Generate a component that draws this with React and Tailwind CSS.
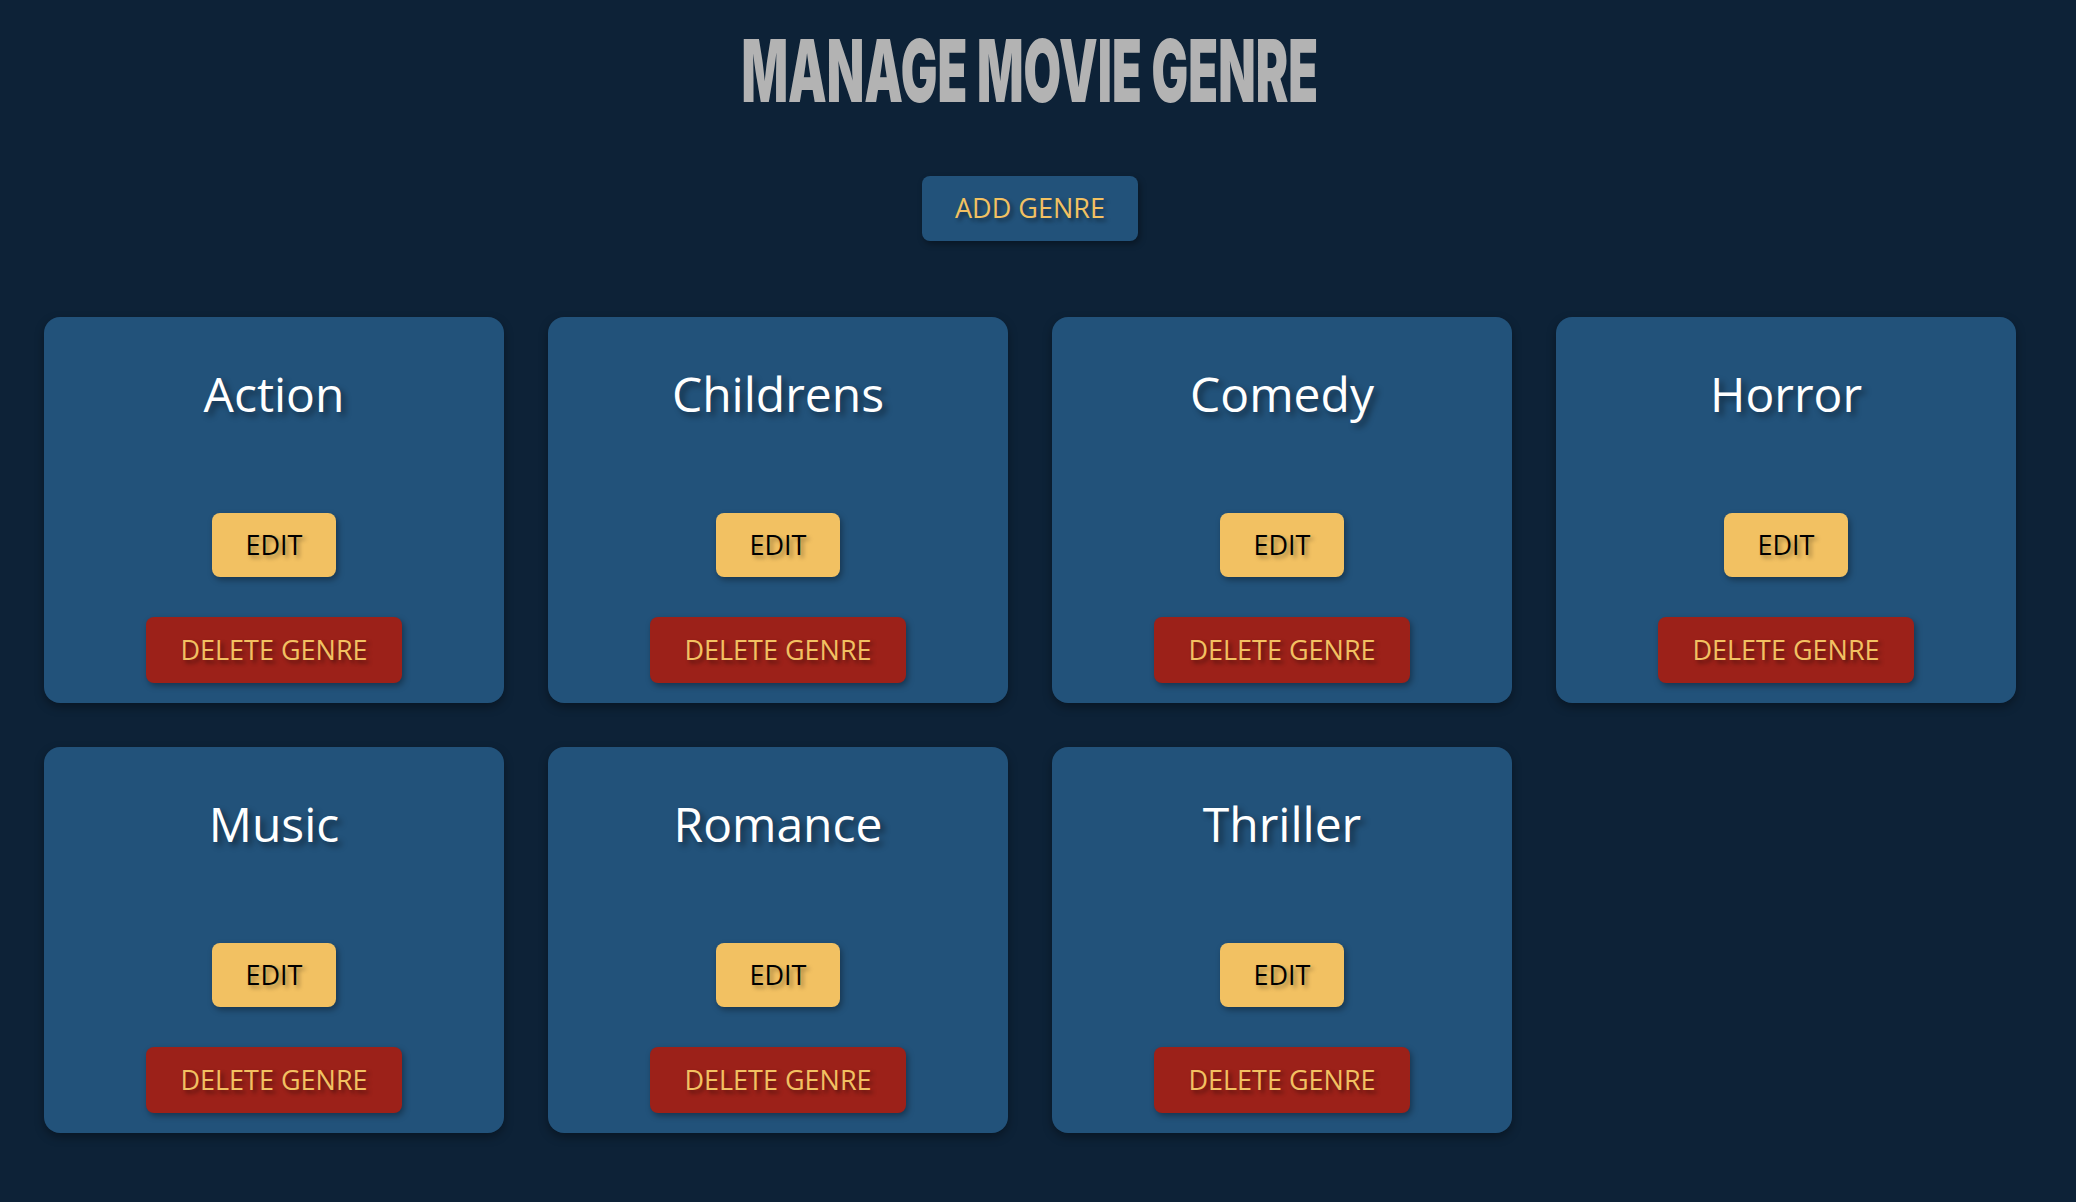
import React from "react";

const genres = ["Action", "Childrens", "Comedy", "Horror", "Music", "Romance", "Thriller"];

function GenreCard({ name }) {
  return (
    <div className="flex flex-col items-center rounded-2xl bg-[#22527a] pt-[45px] pb-[20px] shadow-[0_4px_10px_rgba(0,0,0,0.35)]">
      <h2 className="text-[48px] leading-[64px] font-medium text-white [text-shadow:4px_4px_6px_rgba(0,0,0,0.45)]">
        {name}
      </h2>
      <button className="mt-[87px] flex h-[64px] w-[124px] items-center justify-center rounded-lg bg-[#f2c162] text-[27px] font-medium text-black shadow-[2px_3px_6px_rgba(0,0,0,0.35)] [text-shadow:3px_3px_4px_rgba(0,0,0,0.35)]">
        EDIT
      </button>
      <button className="mt-[40px] flex h-[66px] w-[256px] items-center justify-center rounded-lg bg-[#9c2119] text-[27px] font-medium text-[#f2c162] shadow-[2px_3px_6px_rgba(0,0,0,0.35)] [text-shadow:3px_3px_4px_rgba(0,0,0,0.45)]">
        DELETE GENRE
      </button>
    </div>
  );
}

export default function App() {
  return (
    <div className="min-h-screen w-full bg-[#0d2237] font-['Open_Sans','Noto_Sans',sans-serif]">
      <div className="w-[2060px] pb-[70px]">
        <div className="flex justify-center pt-[27px]">
          <h1 className="inline-block origin-center scale-x-[0.56] whitespace-nowrap font-['Inter',sans-serif] text-[87px] leading-[88px] font-black text-[#b3b3b3]">
            MANAGE MOVIE GENRE
          </h1>
        </div>
        <div className="mt-[61px] flex justify-center">
          <button className="flex h-[65px] items-center rounded-lg bg-[#22527a] px-[33px] text-[27px] font-medium text-[#f2c162] shadow-[2px_3px_6px_rgba(0,0,0,0.35)] [text-shadow:3px_3px_4px_rgba(0,0,0,0.45)]">
            ADD GENRE
          </button>
        </div>
        <div className="mt-[76px] grid grid-cols-4 gap-[44px] px-[44px]">
          {genres.map((g) => (
            <GenreCard key={g} name={g} />
          ))}
        </div>
      </div>
    </div>
  );
}
